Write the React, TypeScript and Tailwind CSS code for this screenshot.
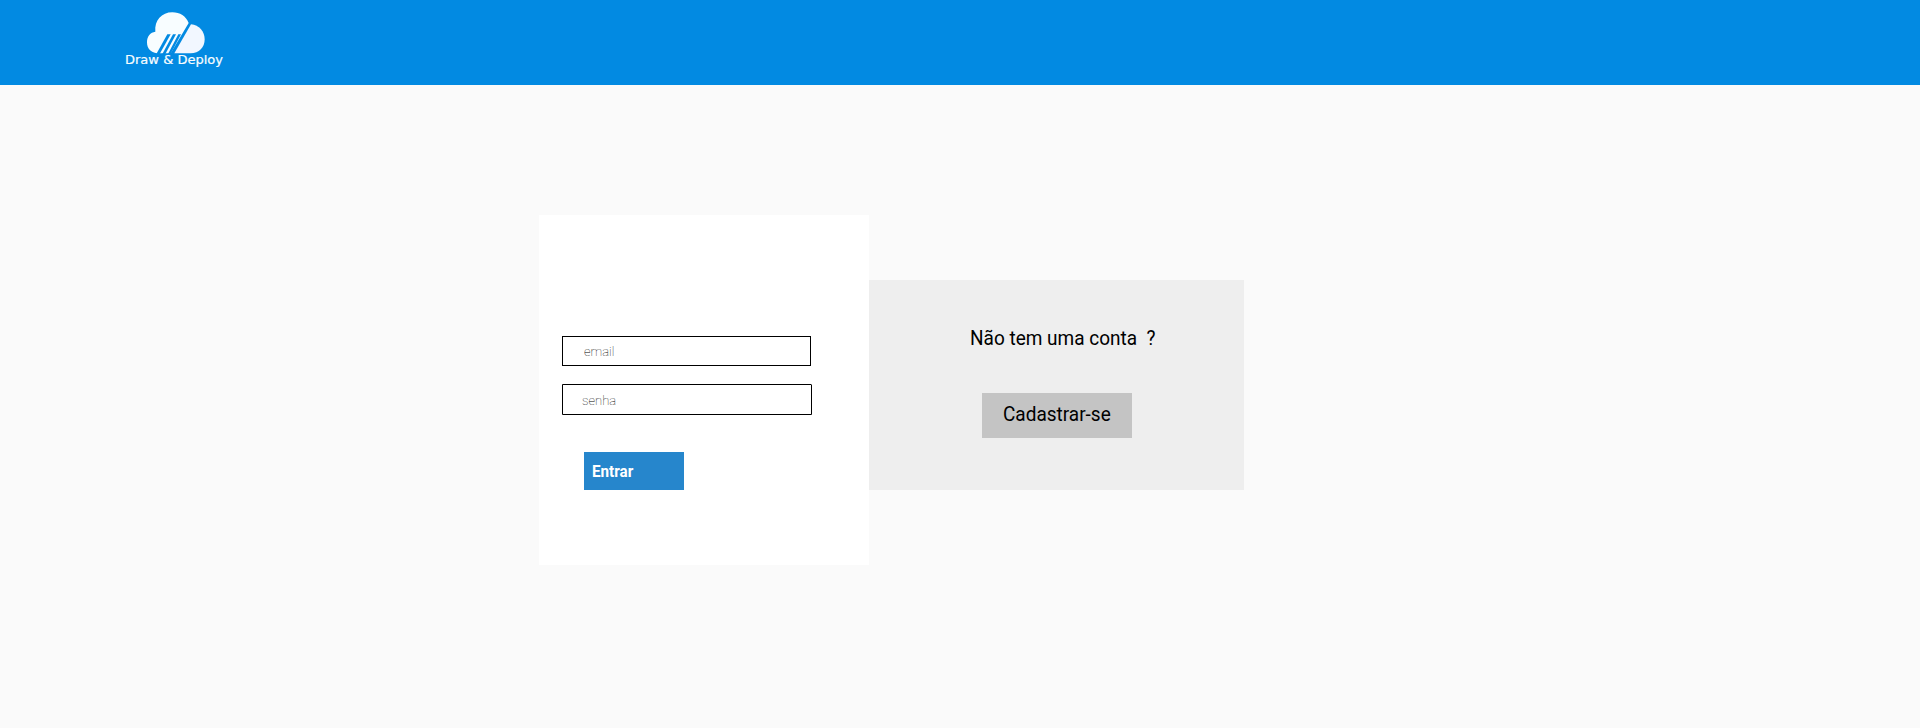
function Logo() {
  return (
    <svg width="130" height="85" viewBox="0 0 390 255" aria-label="Draw & Deploy">
      <path
        fill="#f8fdff"
        d="M141 160 C122 158 111 145 111 127 C111 108 121 97 136 95 C133 61 155 37 187 37 C210 37 228 49 236 69 L182 160 Z"
      />
      <path fill="#f2f7ff" d="M243 73 C267 75 284 94 284 118 C284 143 267 160 242 160 L193 160 Z" />
      <g fill="#028ae2">
        <path d="M172 103 H182 L149 162 H139 Z" />
        <path d="M189 103 H198 L166 162 H157 Z" />
        <path d="M205 103 H213 L182 162 H174 Z" />
      </g>
      <text
        x="45"
        y="193"
        fill="#f8fdff"
        stroke="#f8fdff"
        strokeWidth="0.6"
        fontSize="35"
        fontFamily="'DejaVu Sans', sans-serif"
        textLength="294"
        lengthAdjust="spacingAndGlyphs"
      >
        Draw &amp; Deploy
      </text>
    </svg>
  );
}

export default function App() {
  return (
    <div className="flex h-[728px] w-full flex-col bg-[#fafafa] font-['Roboto',sans-serif] text-black">
      <header className="flex h-[85px] shrink-0 bg-[#028ae2] pl-[110px]">
        <Logo />
      </header>
      <main className="flex items-start pt-[130px] pl-[539px]">
        <form className="flex h-[350px] w-[330px] flex-col items-start bg-white pt-[121px] pl-[23px]">
          <input
            type="email"
            placeholder="email"
            className="h-[30px] w-[249px] border border-black bg-white pl-[21px] text-[13px] font-thin placeholder:text-black"
          />
          <input
            type="password"
            placeholder="senha"
            className="mt-[18px] h-[31px] w-[250px] rounded-tr-[1px] border border-black bg-white pt-[2px] pl-[19px] text-[13px] font-thin placeholder:text-black"
          />
          <button
            type="button"
            className="mt-[37px] ml-[22px] h-[38px] w-[100px] bg-[#2686cc] pt-px pl-[8px] text-left text-[16px] font-bold text-white"
          >
            <span className="inline-block origin-left scale-x-[0.95]">Entrar</span>
          </button>
        </form>
        <section className="mt-[65px] flex h-[210px] w-[375px] flex-col items-start bg-[#eeeeee] pt-[46px]">
          <p className="ml-[101px] origin-left scale-x-[0.95] text-[20px] leading-6 whitespace-pre">Não tem uma conta  ?</p>
          <button type="button" className="mt-[43px] ml-[113px] flex h-[45px] w-[150px] bg-[#c4c4c4] pt-[9px] pl-[21px] text-left text-[20px] leading-6">
            <span className="inline-block origin-left scale-x-[0.95]">Cadastrar-se</span>
          </button>
        </section>
      </main>
    </div>
  );
}
